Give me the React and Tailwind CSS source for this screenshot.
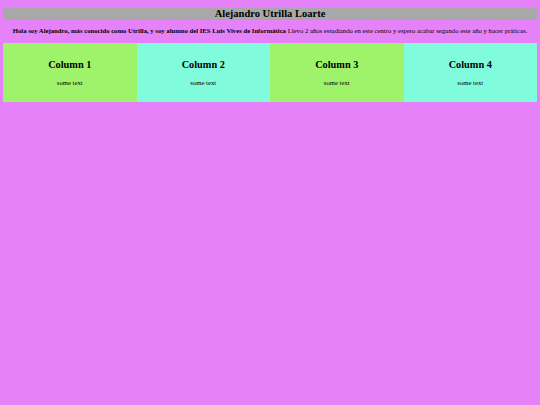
export default function App() {
  const cols = [
    { title: "Column 1", bg: "bg-[#9ef36b]" },
    { title: "Column 2", bg: "bg-[#80fbdc]" },
    { title: "Column 3", bg: "bg-[#9ef36b]" },
    { title: "Column 4", bg: "bg-[#80fbdc]" },
  ];

  return (
    <div className="min-h-screen bg-[#e682f9] px-[3px] pt-[8px] text-black" style={{ fontFamily: '"Liberation Serif", serif' }}>
      <h1 className="h-[12px] bg-[#a8a8a8] text-center text-[10.5px] font-bold leading-[12px]">Alejandro Utrilla Loarte</h1>
      <p className="mt-[7px] mb-[8px] text-center text-[6.7px] leading-[8px]">
        <b>Hola soy Alejandro, más conocido como Utrilla, y soy alumno del IES Luis Vives de Informática</b> Llevo 2 años estudiando en este centro y espero acabar segundo este año y hacer práticas.
      </p>
      <div className="grid grid-cols-4">
        {cols.map((c) => (
          <div key={c.title} className={`${c.bg} flex h-[59px] flex-col items-center pt-[16px]`}>
            <h2 className="text-[10.3px] font-bold leading-[12px]">{c.title}</h2>
            <p className="mt-[8px] text-[6.7px] leading-[8px]">some text</p>
          </div>
        ))}
      </div>
    </div>
  );
}
